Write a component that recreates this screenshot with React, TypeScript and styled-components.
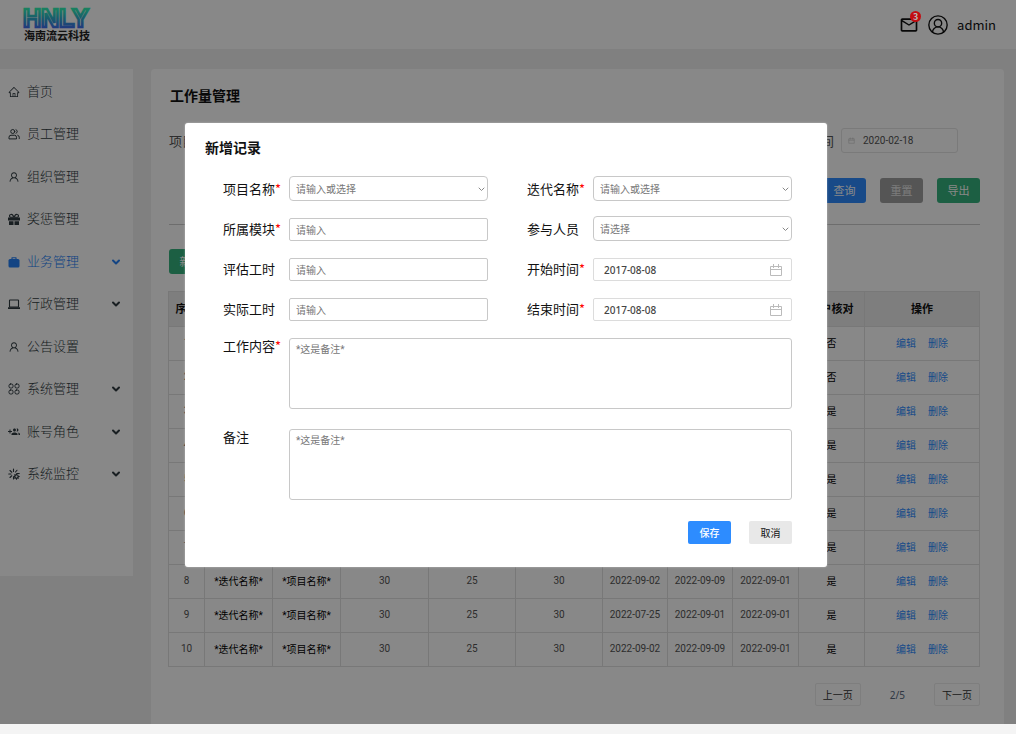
import React, { useState } from "react";
import styled, { createGlobalStyle } from "styled-components";
import { AiOutlineHome, AiOutlineUser } from "react-icons/ai";
import { MdMailOutline } from "react-icons/md";
import { ChevronDown, CircleUserRound } from "lucide-react";

const GlobalStyle = createGlobalStyle`
  *, *::before, *::after { box-sizing: border-box; }
  body {
    margin: 0;
    background: #f4f4f4;
    font-family: "Noto Sans", "Noto Sans CJK SC", sans-serif;
    color: #111;
  }
  button, input, select, textarea { font-family: inherit; margin: 0; }
`;

const Page = styled.div`
  position: relative;
  background: #f1f1f1;
`;

const Header = styled.header`
  display: flex;
  align-items: center;
  justify-content: space-between;
  height: 49px;
  padding: 0 20px 0 24px;
  background: #fff;
`;

const Brand = styled.div`
  display: flex;
  flex-direction: column;
  color: #222;
  font-family: "Noto Sans CJK SC", sans-serif;
  font-size: 11px;
  font-weight: 700;
  line-height: 12px;
`;

const Account = styled.div`
  display: flex;
  align-items: center;
  gap: 8px;
  font-family: "Noto Sans CJK SC", sans-serif;
  font-size: 13px;
`;

const Mail = styled.span`
  position: relative;
  display: flex;
`;

const Badge = styled.span`
  position: absolute;
  z-index: 2;
  top: -4px;
  right: -2px;
  width: 11px;
  height: 11px;
  border-radius: 50%;
  background: #c30d12;
  color: #bbb;
  font-size: 9px;
  font-weight: 600;
  line-height: 11px;
  text-align: center;
`;

const Body = styled.div`
  display: flex;
  align-items: flex-start;
  gap: 18px;
  padding: 20px 12px 0 0;
`;

const Sidebar = styled.nav`
  flex: none;
  width: 133px;
  min-height: 507px;
  background: #fff;
`;

const Menu = styled.ul`
  display: grid;
  grid-auto-rows: 1fr;
  height: 425px;
  margin: 0;
  padding: 0;
  list-style: none;
`;

const MenuLink = styled.a<{ $active?: boolean }>`
  display: flex;
  align-items: center;
  height: 100%;
  gap: 7px;
  padding: 0 11px 0 8px;
  color: ${(p) => (p.$active ? "#2580f5" : "#2f3a40")};
  font-family: "Noto Sans CJK SC", sans-serif;
  font-size: 13px;
  font-weight: 300;
  text-decoration: none;
  svg { flex: none; margin-top: 3px; }
  span { flex: 1; }
`;

const Main = styled.main`
  flex: 1;
  min-width: 0;
  min-height: 655px;
  padding: 15px 24px 18px 17px;
  border-radius: 4px 4px 0 0;
  background: #fff;
`;

const Title = styled.h1`
  margin: 0;
  padding-left: 2px;
  font-size: 14px;
  font-weight: 700;
  line-height: 24px;
`;

const Filters = styled.form`
  margin-left: 1px;
  border-bottom: 1px solid #ccc;
  padding: 20px 0 21px;
`;

const FilterRow = styled.div`
  display: flex;
  justify-content: space-between;
  padding-right: 22px;
`;

const FilterField = styled.label`
  display: flex;
  align-items: center;
  gap: 7px;
  color: #555;
  font-size: 13px;
`;

const FilterBox = styled.span`
  display: flex;
  align-items: center;
  gap: 8px;
  width: 117px;
  height: 25px;
  padding: 0 6px;
  border: 1px solid #e4e4e4;
  border-radius: 3px;
  input {
    width: 80px;
    border: 0;
    padding: 0;
    background: none;
    color: #555;
    font-family: Roboto, sans-serif;
    font-size: 10px;
  }
`;

const FilterActions = styled.div`
  display: flex;
  justify-content: flex-end;
  gap: 14px;
  margin-top: 25px;
`;

const buttonColors = {
  primary: ["#2d8cff", "#fff"],
  success: ["#36b37e", "#fff"],
  muted: ["#a0a0a0", "#e8e8e8"],
  plain: ["#e8e8e8", "#111"],
};

const Button = styled.button<{ $kind: keyof typeof buttonColors; $small?: boolean }>`
  width: 43px;
  height: ${(p) => (p.$small ? 23 : 25)}px;
  padding: 0;
  border: 0;
  border-radius: ${(p) => (p.$small ? 2 : 3)}px;
  background: ${(p) => buttonColors[p.$kind][0]};
  color: ${(p) => buttonColors[p.$kind][1]};
  font-size: ${(p) => (p.$small ? 10 : 11)}px;
  font-weight: ${(p) => (p.$small && p.$kind === "primary" ? 500 : 400)};
  line-height: 20px;
`;

const Toolbar = styled.div`
  padding: 24px 0 17px 1px;
  line-height: 0;
`;

const Table = styled.table`
  width: 100%;
  table-layout: fixed;
  border-collapse: collapse;
  font-family: Roboto, "Noto Sans CJK SC", sans-serif;
  font-size: 10px;
  text-align: center;
  th, td { padding: 0 0 2px; border: 1px solid #e2e2e2; }
  th { height: 35px; background: #ededed; font-size: 11px; font-weight: 700; }
  td { height: 34px; color: #555; }
  td.text { color: #000; }
`;

const RowLink = styled.a`
  color: #2d8cff;
  text-decoration: none;
  & + & { margin-left: 12px; }
`;

const Pager = styled.div`
  display: flex;
  align-items: center;
  justify-content: flex-end;
  gap: 29px;
  margin-top: 16px;
  color: #5a6a80;
  font-size: 10px;
`;

const PageButton = styled.button`
  width: 46px;
  height: 23px;
  padding: 0;
  border: 1px solid #ececec;
  border-radius: 2px;
  background: #fff;
  color: #333;
  font-size: 10px;
  line-height: 20px;
`;

const Overlay = styled.div`
  position: absolute;
  inset: 0;
  z-index: 1;
  display: flex;
  align-items: flex-start;
  justify-content: center;
  padding: 123px 4px 0 0;
  background: rgba(0, 0, 0, 0.467);
`;

const Dialog = styled.form`
  width: 642px;
  padding: 13px 35px 23px 38px;
  border-radius: 3px;
  background: #fff;
  box-shadow: 0 0 2px rgba(255, 255, 255, 0.5);
`;

const DialogTitle = styled.h2`
  margin: 0 0 16px -18px;
  font-size: 14px;
  font-weight: 600;
  line-height: 24px;
`;

const FieldGrid = styled.div`
  display: grid;
  grid-template-columns: 1fr 1fr;
  grid-auto-rows: 25px;
  gap: 15px 39px;
`;

const Field = styled.div`
  display: flex;
  align-items: flex-end;
`;

const Label = styled.label`
  flex: none;
  width: 66px;
  font-size: 13px;
  line-height: 24px;
  font-family: "Noto Sans CJK SC", sans-serif;
`;

const AreaRow = styled.div`
  display: flex;
  align-items: flex-start;
  margin-top: 17px;
  & + & { margin-top: 20px; }
  ${Label} { line-height: 16px; }
`;

const Star = styled.span`
  color: #f00;
`;

const TextInput = styled.input`
  flex: 1;
  min-width: 0;
  height: 23px;
  padding: 0 6px;
  border: 1px solid #c8c8c8;
  border-radius: 2px;
  font-size: 10px;
  &::placeholder { color: #777; }
`;

const SelectBox = styled.div`
  display: grid;
  flex: 1;
  min-width: 0;
  align-items: center;
  > * { grid-area: 1 / 1; }
  svg { justify-self: end; margin: 2px 3px 0 0; color: #888; pointer-events: none; }
`;

const Select = styled.select`
  appearance: none;
  width: 100%;
  height: 25px;
  padding: 0 6px;
  border: 1px solid #c8c8c8;
  border-radius: 4px;
  background: #fff;
  color: #777;
  font-size: 10px;
`;

const DateBox = styled.div`
  display: flex;
  flex: 1;
  align-items: center;
  min-width: 0;
  height: 23px;
  padding: 0 8px 0 10px;
  border: 1px solid #dcdcdc;
  border-radius: 2px;
  input {
    flex: 1;
    min-width: 0;
    border: 0;
    padding: 0;
    color: #444;
    font-size: 10px;
    font-weight: 500;
  }
`;

const Area = styled.textarea`
  flex: 1;
  height: 71px;
  padding: 4px 6px;
  border: 1px solid #c8c8c8;
  border-radius: 3px;
  resize: none;
  font-family: Roboto, "Noto Sans CJK SC", sans-serif;
  font-size: 10px;
  line-height: 14px;
  &::placeholder { color: #777; }
`;

const DialogActions = styled.div`
  display: flex;
  justify-content: flex-end;
  gap: 18px;
  margin-top: 21px;
`;

const LogoMark = styled.svg`
  overflow: visible;
`;

const Logo = () => (
  <LogoMark width="68" height="20" viewBox="0 0 68 20" role="img" aria-label="HNLY">
    <defs>
      <linearGradient id="brand" x1="0" y1="0" x2="0" y2="20" gradientUnits="userSpaceOnUse">
        <stop offset="0" stopColor="#2ff0b4" />
        <stop offset="0.5" stopColor="#30a8cc" />
        <stop offset="1" stopColor="#4066f0" />
      </linearGradient>
    </defs>
    <text x="-1" y="18" fontFamily="Liberation Sans, sans-serif" fontWeight="700" fontSize="25" fill="none" stroke="url(#brand)" strokeWidth="2.600">HNLY</text>
  </LogoMark>
);

const stroke = { fill: "none", stroke: "currentColor", strokeLinecap: "round", strokeLinejoin: "round" } as const;

const StaffIcon = () => (
  <svg width="12" height="12" viewBox="0 0 24 24" strokeWidth="2" {...stroke}>
    <circle cx="9.500" cy="7" r="4" />
    <path d="M2 21v-2.500a4 4 0 0 1 4-4h7a4 4 0 0 1 4 4V21zM16 3.300a4 4 0 0 1 0 7.400M19.500 14.500a4 4 0 0 1 3 4V21" />
  </svg>
);

const GiftIcon = () => (
  <svg width="12" height="12" viewBox="0 0 24 24" fill="currentColor">
    <path d="M0 9h24v6H0zM2 16.500h9V24H2zM13 16.500h9V24h-9z" />
    <path d="M11 8.500H4.500a3 3 0 0 1 1-5.500C8.500 2 11 5 11 8.500zM13 8.500h6.500a3 3 0 0 0-1-5.500C15.500 2 13 5 13 8.500z" fill="none" stroke="currentColor" strokeWidth="2.400" />
  </svg>
);

const CaseIcon = () => (
  <svg width="12" height="12" viewBox="0 0 24 24" fill="currentColor">
    <rect x="1" y="6" width="22" height="17" rx="3" />
    <path d="M8 7V3.500h8V7" fill="none" stroke="currentColor" strokeWidth="2.400" strokeLinejoin="round" />
  </svg>
);

const LaptopIcon = () => (
  <svg width="12" height="12" viewBox="0 0 24 24" fill="currentColor">
    <rect x="3" y="4" width="18" height="14" rx="1" fill="none" stroke="currentColor" strokeWidth="2.200" />
    <path d="M0 18.500h24V22H0z" />
  </svg>
);

const AppsIcon = () => (
  <svg width="12" height="12" viewBox="0 0 24 24" strokeWidth="2" {...stroke}>
    <rect x="2" y="2" width="8" height="8" rx="3" />
    <rect x="14" y="2" width="8" height="8" rx="3" />
    <rect x="2" y="14" width="8" height="8" rx="3" />
    <rect x="14" y="14" width="8" height="8" rx="3" />
  </svg>
);

const GroupAddIcon = () => (
  <svg width="12" height="12" viewBox="0 0 24 24" fill="currentColor">
    <path d="M8 10H5V7H3v3H0v2h3v3h2v-3h3v-2zm10 1c1.660 0 2.990-1.340 2.990-3S19.660 5 18 5c-.32 0-.63.05-.91.14.57.81.9 1.790.9 2.860s-.34 2.040-.9 2.860c.28.09.59.14.91.14zm-5 0c1.660 0 2.990-1.340 2.990-3S14.660 5 13 5c-1.660 0-3 1.340-3 3s1.340 3 3 3zm6.620 2.160c.83.73 1.380 1.660 1.380 2.840v2h3v-2c0-1.540-2.370-2.490-4.380-2.840zM13 13c-2 0-6 1-6 3v2h12v-2c0-2-4-3-6-3z" />
  </svg>
);

const MonitorIcon = () => (
  <svg width="12" height="12" viewBox="0 0 24 24" strokeWidth="2.200" {...stroke}>
    <path d="M11 2v5M4 5l3.500 3.500M18 4.500 15 8M1.500 12H6M4 19l3.500-3.500M11 17.500V22M18 11h4.500" />
    <circle cx="17" cy="17" r="3.500" />
    <path d="M17 11.800v1.500M17 20.700v1.800M12 17h1.500M20.500 17h2M13.500 13.500l1 1M20.500 20.500l-1-1M13.500 20.500l1-1" />
  </svg>
);

const CalendarIcon = ({ size = 14 }: { size?: number }) => (
  <svg width={size} height={size} viewBox="0 0 14 14" fill="none" stroke="#bbb">
    <path d="M1.500 3.500h11v9h-11zM1.500 6.500h11M4.500 1v4M9.500 1v4" />
  </svg>
);

const Arrow = () => (
  <svg width="7" height="5" viewBox="0 0 7 5" {...stroke}>
    <path d="M1 1l2.500 2.500L6 1" />
  </svg>
);

const menu = [
  { name: "首页", icon: <AiOutlineHome size={12} /> },
  { name: "员工管理", icon: <StaffIcon /> },
  { name: "组织管理", icon: <AiOutlineUser size={12} /> },
  { name: "奖惩管理", icon: <GiftIcon /> },
  { name: "业务管理", icon: <CaseIcon />, open: true, active: true },
  { name: "行政管理", icon: <LaptopIcon />, open: true },
  { name: "公告设置", icon: <AiOutlineUser size={12} /> },
  { name: "系统管理", icon: <AppsIcon />, open: true },
  { name: "账号角色", icon: <GroupAddIcon />, open: true },
  { name: "系统监控", icon: <MonitorIcon />, open: true },
];

const widths = [36, 68, 68, 88, 87, 87, 65, 65, 66, 66];
const heads = ["序号", "迭代名称", "项目名称", "评估工时", "实际工时", "核对工时", "开始时间", "结束时间", "核对时间", "客户核对", "操作"];
const rows = Array.from({ length: 10 }, (_, i) => ({
  id: i + 1,
  start: i === 8 ? "2022-07-25" : "2022-09-02",
  end: i === 8 ? "2022-09-01" : "2022-09-09",
  checked: i < 2 ? "否" : "是",
}));

type FieldProps = { id: string; label: string; required?: boolean };

const FieldLabel = ({ id, label, required }: FieldProps) => (
  <Label htmlFor={id}>
    {label}
    {required && <Star>*</Star>}
  </Label>
);

const InputField = (p: FieldProps) => (
  <Field>
    <FieldLabel {...p} />
    <TextInput id={p.id} placeholder="请输入" />
  </Field>
);

const SelectField = ({ hint, ...p }: FieldProps & { hint: string }) => (
  <Field>
    <FieldLabel {...p} />
    <SelectBox>
      <Select id={p.id}>
        <option>{hint}</option>
      </Select>
      <Arrow />
    </SelectBox>
  </Field>
);

const DateField = (p: FieldProps) => (
  <Field>
    <FieldLabel {...p} />
    <DateBox>
      <input id={p.id} defaultValue="2017-08-08" />
      <CalendarIcon />
    </DateBox>
  </Field>
);

const AreaField = (p: FieldProps) => (
  <AreaRow>
    <FieldLabel {...p} />
    <Area id={p.id} placeholder="*这是备注*" />
  </AreaRow>
);

export default function App() {
  const [open, setOpen] = useState(true);
  const close = () => setOpen(false);
  return (
    <Page>
      <GlobalStyle />
      <Header>
        <Brand>
          <Logo />
          海南流云科技
        </Brand>
        <Account>
          <Mail>
            <MdMailOutline size={20} />
            <Badge>3</Badge>
          </Mail>
          <CircleUserRound size={22} strokeWidth={1.5} />
          admin
        </Account>
      </Header>
      <Body>
        <Sidebar>
          <Menu>
            {menu.map((m) => (
              <li key={m.name}>
                <MenuLink href="#" $active={m.active}>
                  {m.icon}
                  <span>{m.name}</span>
                  {m.open && <ChevronDown size={12} strokeWidth={4} />}
                </MenuLink>
              </li>
            ))}
          </Menu>
        </Sidebar>
        <Main>
          <Title>工作量管理</Title>
          <Filters>
            <FilterRow>
              <FilterField>
                项目名称
                <FilterBox>
                  <input />
                </FilterBox>
              </FilterField>
              <FilterField>
                结束时间
                <FilterBox>
                  <CalendarIcon size={7} />
                  <input defaultValue="2020-02-18" />
                </FilterBox>
              </FilterField>
            </FilterRow>
            <FilterActions>
              <Button type="button" $kind="primary">查询</Button>
              <Button type="button" $kind="muted">重置</Button>
              <Button type="button" $kind="success">导出</Button>
            </FilterActions>
          </Filters>
          <Toolbar>
            <Button type="button" $kind="success" onClick={() => setOpen(true)}>新增</Button>
          </Toolbar>
          <Table>
            <colgroup>
              {widths.map((w, i) => <col key={i} width={w} />)}
              <col />
            </colgroup>
            <thead>
              <tr>{heads.map((h) => <th key={h}>{h}</th>)}</tr>
            </thead>
            <tbody>
              {rows.map((r) => (
                <tr key={r.id}>
                  <td>{r.id}</td>
                  <td className="text">*迭代名称*</td>
                  <td className="text">*项目名称*</td>
                  <td>30</td>
                  <td>25</td>
                  <td>30</td>
                  <td>{r.start}</td>
                  <td>{r.end}</td>
                  <td>2022-09-01</td>
                  <td className="text">{r.checked}</td>
                  <td>
                    <RowLink href="#">编辑</RowLink>
                    <RowLink href="#">删除</RowLink>
                  </td>
                </tr>
              ))}
            </tbody>
          </Table>
          <Pager>
            <PageButton type="button">上一页</PageButton>
            <span>2/5</span>
            <PageButton type="button">下一页</PageButton>
          </Pager>
        </Main>
      </Body>
      {open && (
        <Overlay>
          <Dialog role="dialog" aria-labelledby="dialog-title">
            <DialogTitle id="dialog-title">新增记录</DialogTitle>
            <FieldGrid>
              <SelectField id="project" label="项目名称" required hint="请输入或选择" />
              <SelectField id="iteration" label="迭代名称" required hint="请输入或选择" />
              <InputField id="module" label="所属模块" required />
              <SelectField id="members" label="参与人员" hint="请选择" />
              <InputField id="estimate" label="评估工时" />
              <DateField id="start" label="开始时间" required />
              <InputField id="actual" label="实际工时" />
              <DateField id="end" label="结束时间" required />
            </FieldGrid>
            <AreaField id="content" label="工作内容" required />
            <AreaField id="remark" label="备注" />
            <DialogActions>
              <Button type="button" $kind="primary" $small onClick={close}>保存</Button>
              <Button type="button" $kind="plain" $small onClick={close}>取消</Button>
            </DialogActions>
          </Dialog>
        </Overlay>
      )}
    </Page>
  );
}
